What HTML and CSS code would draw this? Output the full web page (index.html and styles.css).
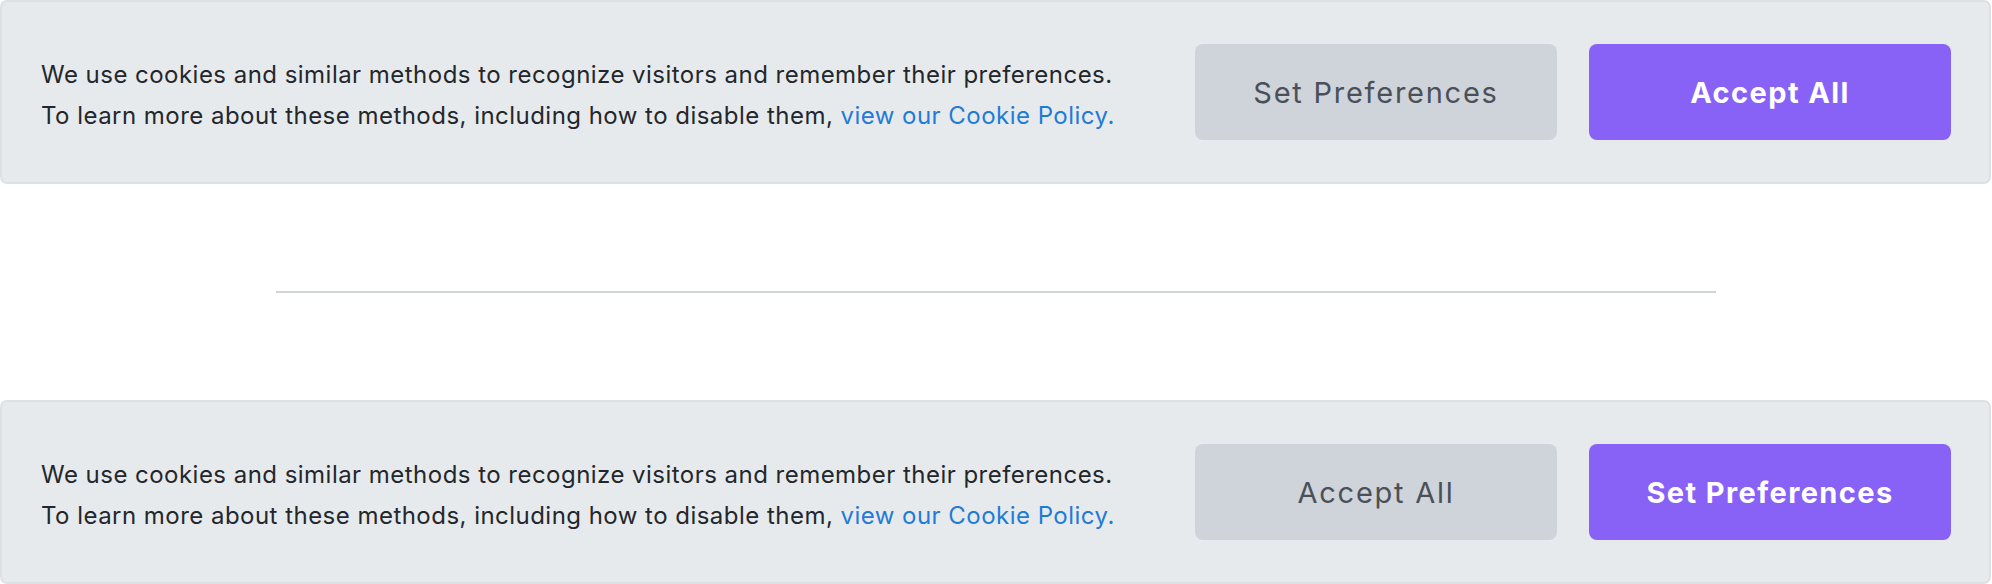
FILE: index.html
```html
<!DOCTYPE html>
<html lang="en">
<head>
<meta charset="utf-8">
<title>Cookie banners</title>
<link rel="stylesheet" href="styles.css">
</head>
<body>
<div class="page">
  <section class="banner">
    <p class="msg">We use cookies and similar methods to recognize visitors and remember their preferences.<br>To learn more about these methods, including how to disable them, <a href="#" class="link">view our Cookie Policy.</a></p>
    <div class="actions">
      <button class="btn btn-secondary">Set Preferences</button>
      <button class="btn btn-primary">Accept All</button>
    </div>
  </section>
  <div class="divider"></div>
  <section class="banner">
    <p class="msg">We use cookies and similar methods to recognize visitors and remember their preferences.<br>To learn more about these methods, including how to disable them, <a href="#" class="link">view our Cookie Policy.</a></p>
    <div class="actions">
      <button class="btn btn-secondary">Accept All</button>
      <button class="btn btn-primary">Set Preferences</button>
    </div>
  </section>
</div>
</body>
</html>
```
FILE: styles.css
```css
* { box-sizing: border-box; }
html, body { margin: 0; padding: 0; background: #ffffff; }
body { font-family: Inter, "Open Sans", "Liberation Sans", sans-serif; }
.page {
  display: flex;
  flex-direction: column;
  align-items: center;
  gap: 107px;
  width: 1992px;
}
.banner {
  width: 1991px;
  height: 184px;
  display: flex;
  align-items: center;
  justify-content: space-between;
  padding: 0 38px 0 39px;
  background: #e7eaed;
  border: 2px solid #dde1e5;
  border-radius: 7px;
  align-self: flex-start;
}
.msg {
  margin: 0;
  padding-top: 5px;
  font-size: 24px;
  line-height: 41px;
  color: #23272c;
  letter-spacing: 0.47px;
}
.link { color: #1f7bd8; text-decoration: none; }
.actions { display: flex; gap: 32px; }
.btn {
  width: 362px;
  height: 96px;
  border: none;
  border-radius: 8px;
  font-family: inherit;
  font-size: 29px;
  letter-spacing: 1.75px;
  cursor: pointer;
}
.btn-secondary { background: #cfd3da; color: #4b5058; font-weight: 400; }
.btn-primary { background: #8862f7; color: #ffffff; font-weight: 700; letter-spacing: 1.4px; }
.divider {
  width: 1440px;
  height: 2px;
  background: #cfd3da;
}
```
